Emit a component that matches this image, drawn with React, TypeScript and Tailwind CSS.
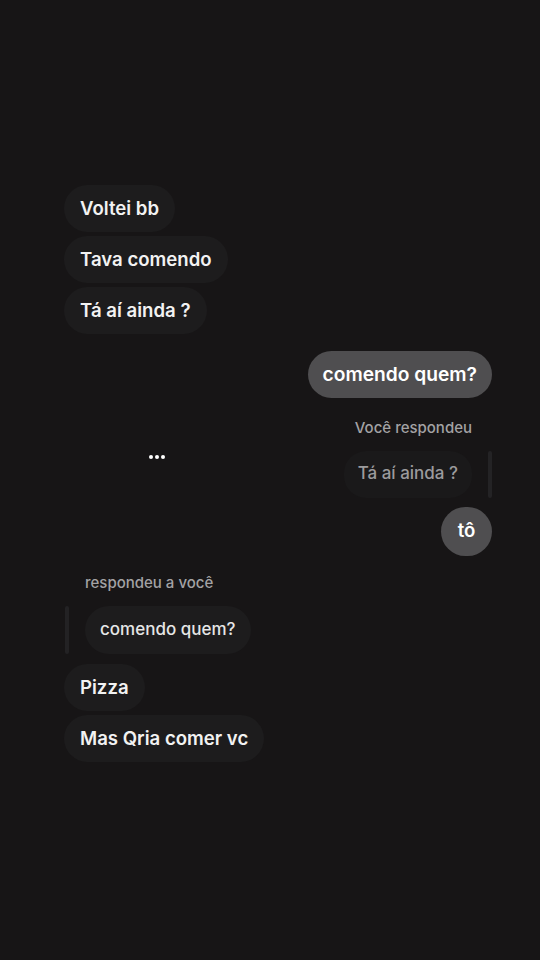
const font = { fontFamily: 'Inter, "Noto Sans", sans-serif' };

const Recv = ({ text }: { text: string }) => (
  <div className="self-start h-[47px] px-4 flex items-center rounded-[24px] bg-[#1d1c1d] text-[18.6px] font-semibold text-[#f2f2f2]">
    {text}
  </div>
);

export default function App() {
  return (
    <div className="w-[540px] h-[960px] bg-[#171516] overflow-hidden" style={font}>
      <div className="flex flex-col pt-[185px] pl-[64px] pr-[48px]">
        <div className="flex flex-col gap-[4px]">
          <Recv text="Voltei bb" />
          <Recv text="Tava comendo" />
          <Recv text="Tá aí ainda ?" />
        </div>

        <div className="self-end mt-[17px] h-[47px] pl-[15px] pr-[15px] flex items-center rounded-[24px] bg-[#4f4e50] text-[19.2px] font-semibold text-white">
          comendo quem?
        </div>

        <div className="self-end mt-[19px] mr-[20px] text-[15px] font-medium text-[#a3a2a4]">Você respondeu</div>

        <div className="mt-[11px] flex items-start justify-between">
          <div className="ml-[85px] mt-[4px] flex gap-[2px]">
            <span className="w-[4px] h-[4px] rounded-full bg-white" />
            <span className="w-[4px] h-[4px] rounded-full bg-white" />
            <span className="w-[4px] h-[4px] rounded-full bg-white" />
          </div>
          <div className="flex items-stretch gap-[16px]">
            <div className="h-[47px] px-[14px] flex items-center rounded-[22px] bg-[#1a191a] text-[17px] font-medium text-[#9c9b9d]">
              Tá aí ainda ?
            </div>
            <div className="w-[4px] rounded-full bg-[#242325]" />
          </div>
        </div>

        <div className="self-end mt-[9px] w-[51px] h-[49px] rounded-full bg-[#4f4e50] flex items-center justify-center text-[18.6px] font-semibold text-white">
          tô
        </div>

        <div className="mt-[16px] ml-[21px] text-[15px] font-medium text-[#a3a2a4]">respondeu a você</div>

        <div className="mt-[12px] flex items-stretch gap-[16px]">
          <div className="ml-[1px] w-[4px] rounded-full bg-[#232224]" />
          <div className="h-[48px] px-[15px] flex items-center rounded-[24px] bg-[#1d1c1d] text-[17px] font-medium text-[#e6e6e6]">
            comendo quem?
          </div>
        </div>

        <div className="mt-[10px] flex flex-col gap-[4px]">
          <Recv text="Pizza" />
          <Recv text="Mas Qria comer vc" />
        </div>
      </div>
    </div>
  );
}
